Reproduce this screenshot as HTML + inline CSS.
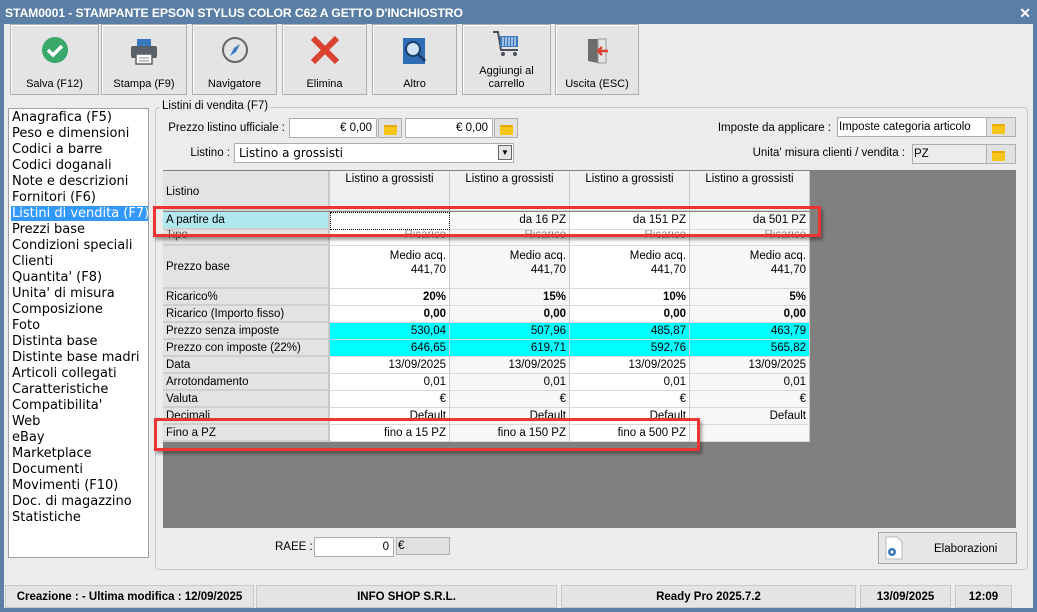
<!DOCTYPE html>
<html><head><meta charset="utf-8">
<style>
*{box-sizing:border-box;margin:0;padding:0}
body{width:1037px;height:612px;position:relative;overflow:hidden;background:#5b7fa7;font-family:"Liberation Sans",sans-serif;font-size:11.5px;color:#000}
.a{position:absolute}
#title{left:0;top:0;width:1037px;height:24px;background:#5a7ea6;color:#fff;font-weight:bold;font-size:12.2px;line-height:26px;padding-left:5px;letter-spacing:-0.1px}
#close{right:6px;top:5px;color:#fff;font-size:14px;font-weight:bold}
#win{left:4px;top:24px;width:1029px;height:584px;background:#ececec}
.btn{top:24px;height:71px;background:#e4e4e4;border:1px solid #adadad;box-shadow:inset 1px 1px #fff;text-align:center;font-size:11px}
.btn .l{position:absolute;left:0;right:0;bottom:3px;line-height:13px}
.btn svg{position:absolute;left:50%;top:10px;margin-left:-17px}
#list{left:8px;top:108px;width:141px;height:450px;background:#fff;border:1px solid #a0a0a0;font-family:"DejaVu Sans",sans-serif;font-size:13px;line-height:16px;padding:1px 0 0 3px;overflow:hidden;white-space:nowrap}
#list .s{background:#3399ff;color:#fff;margin-left:-1px;padding-left:1px}
#grp{left:155px;top:107px;width:873px;height:463px;border:1px solid #c8c8c8;border-radius:4px}
.lbl{font-size:11.5px;white-space:nowrap}
.rl{text-align:right}
.inp{background:#fff;border:1px solid #abadb3;height:20px;line-height:18px;padding:0 4px;white-space:nowrap}
.fb{width:24px;height:20px;background:#e1e1e1;border:1px solid #b0b0b0}
.fb:after{content:"";position:absolute;left:5px;top:6px;width:13px;height:8px;background:#f5c518;border-radius:1px;border-top:2px solid #e8a800}
#grid{left:163px;top:170px;width:853px;height:358px;background:#808080}
.row{position:absolute;left:163px;display:flex;overflow:hidden}
.row div{border-right:1px solid #c8c8c8;border-bottom:1px solid #d8d8d8;overflow:hidden;white-space:nowrap;padding:0 3px;line-height:16px;background:#f7f7f7;text-align:right}
.row div:first-child{width:167px;text-align:left;background:#e3e3e3;border-right:2px solid #c8c8c8;border-bottom:2px solid #cfcfcf}
.row div:nth-child(n+2){width:120px}
.row div:nth-child(2n){background:#fff}
.b div:nth-child(n+2){font-weight:bold}
.c div:nth-child(n+2){background:#00ffff !important}
.red{border:3px solid #ee3333;box-shadow:2px 3px 3px rgba(0,0,0,.35)}
.st{top:585px;height:23px;background:#e4e4e4;border:1px solid #c8c8c8;font-weight:bold;font-size:11.5px;line-height:22px;text-align:center}
</style></head><body>
<div id="title" class="a">STAM0001 - STAMPANTE EPSON STYLUS COLOR C62 A GETTO D'INCHIOSTRO</div>
<div id="close" class="a">✕</div>
<div id="win" class="a"></div>

<div class="a btn" style="left:10px;width:89px"><svg width="34" height="34" viewBox="0 0 34 34"><circle cx="17" cy="15" r="13" fill="#3aa86b"/><path d="M10 15l5 5 9-9" stroke="#fff" stroke-width="3.5" fill="none"/></svg><div class="l">Salva (F12)</div></div>
<div class="a btn" style="left:101px;width:86px"><svg width="34" height="34" viewBox="0 0 34 34"><rect x="10" y="4" width="14" height="8" fill="#3a78c0"/><rect x="4" y="11" width="26" height="12" rx="2" fill="#5a6068"/><rect x="9" y="19" width="16" height="10" fill="#fff" stroke="#5a6068" stroke-width="1.5"/><path d="M12 23h10M12 26h10" stroke="#888"/></svg><div class="l">Stampa (F9)</div></div>
<div class="a btn" style="left:192px;width:85px"><svg width="34" height="34" viewBox="0 0 34 34"><circle cx="17" cy="15" r="12" fill="none" stroke="#666" stroke-width="2"/><path d="M22 9l-4 8-6 4 4-8z" fill="#3a78c0"/></svg><div class="l">Navigatore</div></div>
<div class="a btn" style="left:282px;width:85px"><svg width="34" height="34" viewBox="0 0 34 34"><path d="M5 3l24 24M29 3L5 27" stroke="#d9432f" stroke-width="6"/></svg><div class="l">Elimina</div></div>
<div class="a btn" style="left:372px;width:85px"><svg width="34" height="34" viewBox="0 0 34 34"><rect x="5" y="3" width="22" height="26" fill="#2f6db5"/><circle cx="15" cy="14" r="7" fill="#cfe2f7" stroke="#1d3f6a" stroke-width="2"/><path d="M20 19l7 7" stroke="#1d3f6a" stroke-width="3"/></svg><div class="l">Altro</div></div>
<div class="a btn" style="left:462px;width:89px"><svg width="34" height="34" viewBox="0 0 34 34" style="top:4px"><path d="M3 3h5l3 18h17" stroke="#4a5058" stroke-width="2" fill="none"/><rect x="10" y="7" width="18" height="11" fill="#3a78c0"/><path d="M13 8v9M16 8v9M19 8v9M22 8v9M25 8v9" stroke="#fff"/><circle cx="13" cy="25" r="2" fill="#4a5058"/><circle cx="25" cy="25" r="2" fill="#4a5058"/></svg><div class="l">Aggiungi al<br>carrello</div></div>
<div class="a btn" style="left:555px;width:84px"><svg width="34" height="34" viewBox="0 0 34 34"><path d="M8 4h10v24l-10-2z" fill="#6d6d6d"/><rect x="18" y="4" width="8" height="24" fill="none" stroke="#999"/><path d="M28 16h-10M22 12l-4 4 4 4" stroke="#d9432f" stroke-width="2.5" fill="none"/></svg><div class="l">Uscita (ESC)</div></div>

<div id="list" class="a">Anagrafica (F5)<br>Peso e dimensioni<br>Codici a barre<br>Codici doganali<br>Note e descrizioni<br>Fornitori (F6)<br><span class="s">Listini di vendita (F7)</span><br>Prezzi base<br>Condizioni speciali<br>Clienti<br>Quantita' (F8)<br>Unita' di misura<br>Composizione<br>Foto<br>Distinta base<br>Distinte base madri<br>Articoli collegati<br>Caratteristiche<br>Compatibilita'<br>Web<br>eBay<br>Marketplace<br>Documenti<br>Movimenti (F10)<br>Doc. di magazzino<br>Statistiche</div>

<div id="grp" class="a"></div>
<div class="a lbl" style="left:160px;top:100px;background:#ececec;padding:0 2px">Listini di vendita (F7)</div>
<div class="a lbl rl" style="left:100px;width:185px;top:122px">Prezzo listino ufficiale :</div>
<div class="a inp" style="left:289px;top:118px;width:88px;text-align:right">€ 0,00</div>
<div class="a fb" style="left:378px;top:118px"></div>
<div class="a inp" style="left:405px;top:118px;width:88px;text-align:right">€ 0,00</div>
<div class="a fb" style="left:494px;top:118px"></div>
<div class="a lbl rl" style="left:150px;width:80px;top:147px">Listino :</div>
<div class="a inp" style="left:234px;top:143px;width:280px;height:20px;font-family:'DejaVu Sans',sans-serif;font-size:12px">Listino a grossisti</div>
<div class="a" style="left:498px;top:145px;width:14px;height:15px;border:1px solid #666;background:#e6e6e6;font-size:8px;text-align:center;line-height:13px">▼</div>
<div class="a lbl rl" style="left:640px;width:191px;top:122px">Imposte da applicare :</div>
<div class="a inp" style="left:837px;top:117px;width:150px;padding-left:1px">Imposte categoria articolo</div>
<div class="a fb" style="left:986px;top:117px;width:30px"></div>
<div class="a lbl rl" style="left:700px;width:205px;top:147px">Unita' misura clienti / vendita :</div>
<div class="a inp" style="left:912px;top:144px;width:75px;background:#ececec;padding-left:1px">PZ</div>
<div class="a fb" style="left:986px;top:144px;width:30px"></div>

<div id="grid" class="a"></div>
<div class="row" style="top:171px;height:40px"><div style="line-height:16px;padding-top:13px;height:40px">Listino</div><div style="text-align:center;background:#f0f0f0">Listino a grossisti</div><div style="text-align:center;background:#f0f0f0">Listino a grossisti</div><div style="text-align:center;background:#f0f0f0">Listino a grossisti</div><div style="text-align:center;background:#f0f0f0">Listino a grossisti</div></div>
<div class="row" style="top:212px;height:18px"><div style="background:#b0e8ee">A partire da</div><div style="border:1px dotted #000"></div><div>da 16 PZ</div><div>da 151 PZ</div><div>da 501 PZ</div></div>
<div class="row" style="top:230px;height:16px"><div style="line-height:10px;color:#555">Tipo</div><div style="line-height:10px;color:#888">Ricarico</div><div style="line-height:10px;color:#888">Ricarico</div><div style="line-height:10px;color:#888">Ricarico</div><div style="line-height:10px;color:#888">Ricarico</div></div>
<div class="row" style="top:246px;height:43px"><div style="line-height:43px">Prezzo base</div><div style="padding-top:3px;line-height:14px">Medio acq.<br>441,70</div><div style="padding-top:3px;line-height:14px">Medio acq.<br>441,70</div><div style="padding-top:3px;line-height:14px">Medio acq.<br>441,70</div><div style="padding-top:3px;line-height:14px">Medio acq.<br>441,70</div></div>
<div class="row b" style="top:289px;height:17px"><div>Ricarico%</div><div>20%</div><div>15%</div><div>10%</div><div>5%</div></div>
<div class="row b" style="top:306px;height:17px"><div>Ricarico (Importo fisso)</div><div>0,00</div><div>0,00</div><div>0,00</div><div>0,00</div></div>
<div class="row c" style="top:323px;height:17px"><div>Prezzo senza imposte</div><div>530,04</div><div>507,96</div><div>485,87</div><div>463,79</div></div>
<div class="row c" style="top:340px;height:17px"><div>Prezzo con imposte (22%)</div><div>646,65</div><div>619,71</div><div>592,76</div><div>565,82</div></div>
<div class="row" style="top:357px;height:17px"><div>Data</div><div>13/09/2025</div><div>13/09/2025</div><div>13/09/2025</div><div>13/09/2025</div></div>
<div class="row" style="top:374px;height:17px"><div>Arrotondamento</div><div>0,01</div><div>0,01</div><div>0,01</div><div>0,01</div></div>
<div class="row" style="top:391px;height:17px"><div>Valuta</div><div>€</div><div>€</div><div>€</div><div>€</div></div>
<div class="row" style="top:408px;height:17px"><div>Decimali</div><div>Default</div><div>Default</div><div>Default</div><div>Default</div></div>
<div class="row" style="top:425px;height:17px"><div>Fino a PZ</div><div>fino a 15 PZ</div><div>fino a 150 PZ</div><div>fino a 500 PZ</div><div></div></div>

<div class="a red" style="left:153px;top:206px;width:668px;height:31px"></div>
<div class="a red" style="left:154px;top:418px;width:546px;height:33px"></div>

<div class="a lbl" style="left:275px;top:541px">RAEE :</div>
<div class="a inp" style="left:314px;top:537px;width:80px;text-align:right">0</div>
<div class="a" style="left:396px;top:537px;width:54px;height:18px;border:1px solid #b0b0b0;background:#e0e0e0;line-height:16px;padding-left:1px">€</div>
<div class="a" style="left:878px;top:532px;width:139px;height:32px;background:#e6e6e6;border:1px solid #a8a8a8;line-height:32px;padding-left:55px">Elaborazioni</div>
<svg class="a" style="left:884px;top:536px" width="20" height="24"><path d="M2 1h11l5 5v17H2z" fill="#fff" stroke="#bbb"/><circle cx="8" cy="16" r="4" fill="#3a78c0"/><circle cx="8" cy="16" r="1.5" fill="#fff"/></svg>

<div class="a st" style="left:5px;width:249px">Creazione : - Ultima modifica : 12/09/2025</div>
<div class="a st" style="left:256px;width:301px">INFO SHOP S.R.L.</div>
<div class="a st" style="left:561px;width:295px">Ready Pro 2025.7.2</div>
<div class="a st" style="left:860px;width:91px">13/09/2025</div>
<div class="a st" style="left:955px;width:57px">12:09</div>
</body></html>
